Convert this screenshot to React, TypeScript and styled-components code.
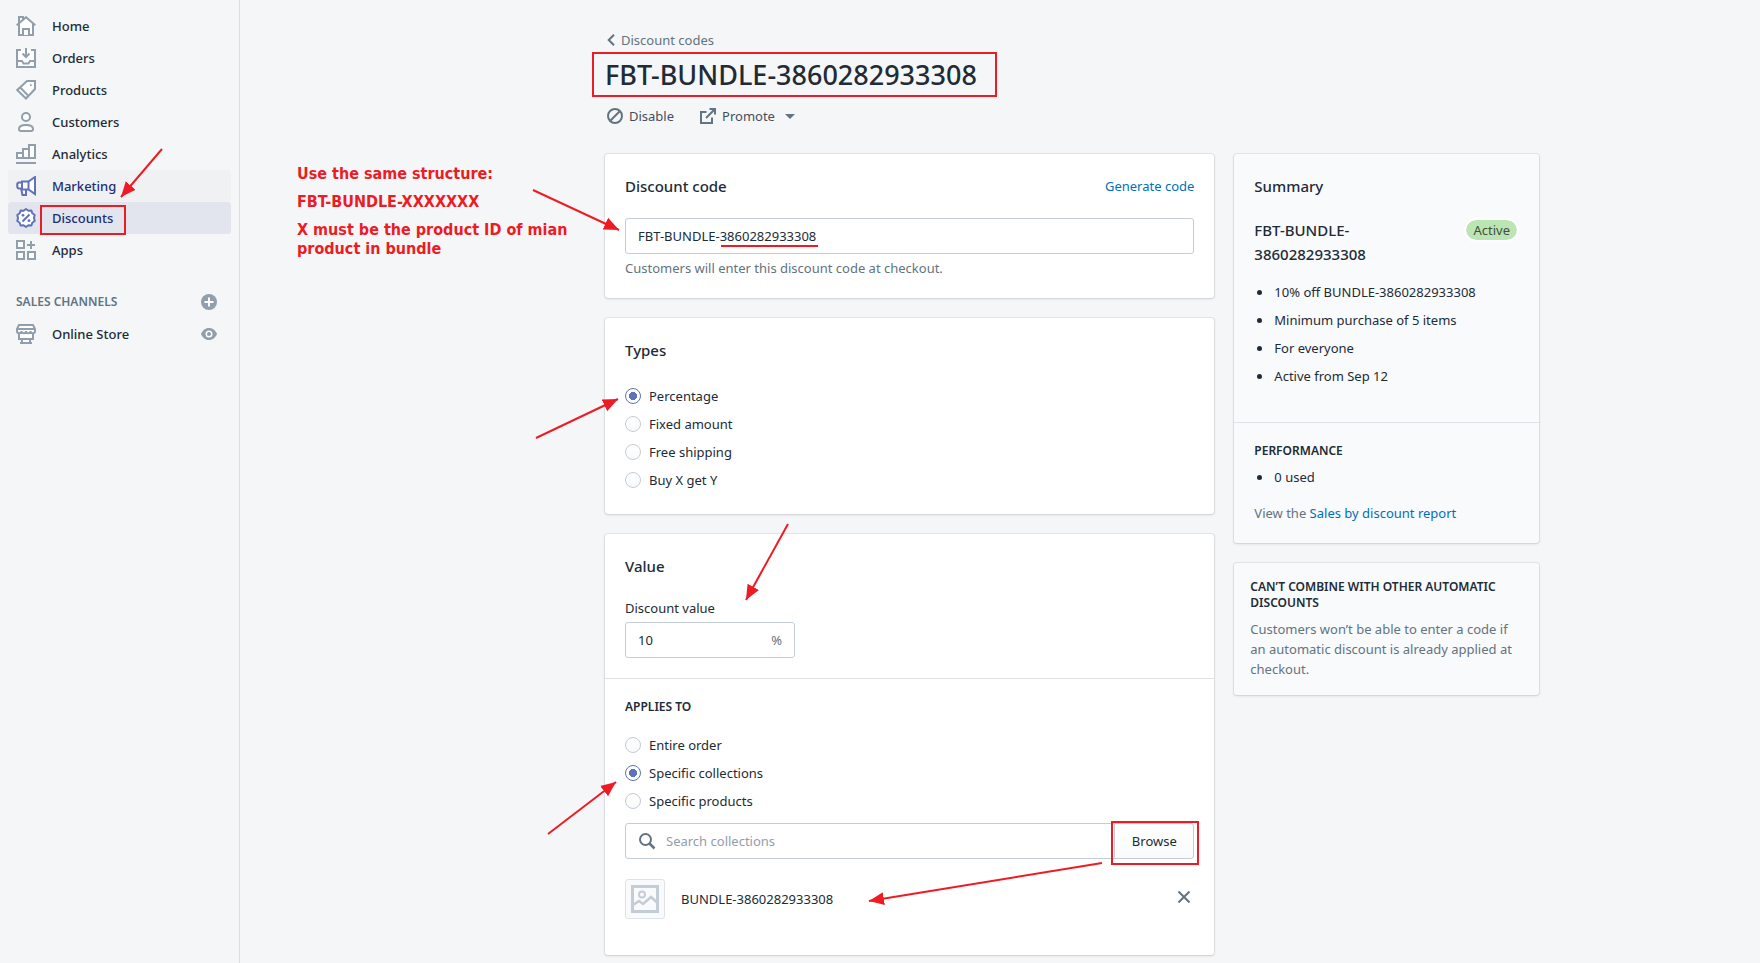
import React from "react";
import styled, { createGlobalStyle, css } from "styled-components";

const color = {
  page: "#f4f6f8",
  subdued: "#f9fafc",
  text: "#212b36",
  muted: "#637381",
  icon: "#919eab",
  iconDark: "#637381",
  border: "#c4cdd5",
  divider: "#dfe3e8",
  active: "#202e78",
  indigo: "#5f72bb",
  link: "#006fbb",
  note: "#ed1c24",
};

const GlobalStyle = createGlobalStyle`
  *, *::before, *::after { box-sizing: border-box; }
  body {
    margin: 0;
    background: ${color.page};
    color: ${color.text};
    font-family: "Noto Sans", "Open Sans", sans-serif;
    font-size: 13px;
    line-height: 20px;
  }
  button, input { font: inherit; color: inherit; }
  h1, h2, h3, p, ul { margin: 0; padding: 0; }
`;

/* ---------- Page frame ---------- */

const Page = styled.div`
  position: relative;
  display: flex;
  min-height: 100vh;
`;

const Sidebar = styled.nav`
  flex: 0 0 240px;
  padding: 10px 8px;
  border-right: 1px solid #d9dde4;
`;

const Main = styled.main`
  flex: 1;
  min-width: 0;
  padding: 30px 20px 8px 365px;
`;

const Content = styled.div`
  max-width: 934px;
`;

const Columns = styled.div`
  display: grid;
  grid-template-columns: 2fr 1fr;
  align-items: start;
  gap: 20px;
  margin-top: 28px;
`;

const Column = styled.div`
  display: flex;
  flex-direction: column;
  gap: 20px;
  min-width: 0;
`;

/* ---------- Navigation ---------- */

const NavList = styled.ul`
  list-style: none;
`;

const NavItem = styled.li`
  position: relative;
  display: flex;
  align-items: center;
`;

const NavLink = styled.a<{ $state?: "hover" | "selected" }>`
  flex: 1;
  display: flex;
  align-items: center;
  gap: 16px;
  height: 32px;
  padding: 0 8px;
  border-radius: 3px;
  color: ${color.text};
  font-weight: 500;
  text-decoration: none;
  --nav-icon: ${color.icon};
  ${({ $state }) =>
    $state &&
    css`
      color: ${color.active};
      background: ${$state === "selected" ? "#e2e5ed" : "#f0f1f3"};
      --nav-icon: ${color.indigo};
    `}
`;

const NavSection = styled.div`
  display: flex;
  align-items: center;
  justify-content: space-between;
  height: 32px;
  margin-top: 20px;
  padding: 0 8px;
`;

const NavHeading = styled.h2`
  color: ${color.muted};
  font-size: 12px;
  font-weight: 600;
`;

const IconButton = styled.button`
  display: flex;
  padding: 2px;
  border: 0;
  background: none;
`;

const SectionAction = styled(IconButton)`
  margin-right: 4px;
`;

const NavAction = styled(IconButton)`
  position: absolute;
  right: 12px;
`;

const RemoveButton = styled(IconButton)`
  margin-right: 2px;
  padding-bottom: 6px;
`;

const NavIcon = styled.svg`
  flex: none;
  width: 20px;
  height: 20px;
  fill: #fff;
  stroke: var(--nav-icon);
  stroke-width: 2;
`;

/* ---------- Page header ---------- */

const Breadcrumb = styled.a`
  display: inline-flex;
  align-items: center;
  gap: 6px;
  padding-left: 2px;
  color: ${color.muted};
  text-decoration: none;
  vertical-align: top;
`;

const TitleRow = styled.div`
  display: flex;
  margin-top: 5px;
`;

const Title = styled.h1`
  position: relative;
  font-size: 27px;
  font-weight: 500;
  line-height: 40px;
`;

const Actions = styled.div`
  display: flex;
  gap: 26px;
  margin-top: 11px;
  padding-left: 2px;
`;

const Action = styled.button`
  display: flex;
  align-items: center;
  gap: 6px;
  padding: 0;
  border: 0;
  background: none;
  color: #454f5b;
`;

const Caret = styled.span`
  margin-left: 4px;
  border: 5px solid transparent;
  border-top-color: ${color.iconDark};
  border-bottom: 0;
`;

/* ---------- Cards ---------- */

const Card = styled.section<{ $subdued?: boolean }>`
  border-radius: 3px;
  background: ${({ $subdued }) => ($subdued ? color.subdued : "#fff")};
  box-shadow: 0 0 0 1px rgba(63, 63, 68, 0.08), 0 1px 3px 0 rgba(63, 63, 68, 0.15);
`;

const Section = styled.div<{ $tight?: boolean }>`
  padding: ${({ $tight }) => ($tight ? "16px" : "20px")};
  & + & {
    border-top: 1px solid ${color.divider};
  }
`;

const CardHeader = styled.div`
  display: flex;
  align-items: center;
  justify-content: space-between;
  margin-bottom: 20px;
`;

const CardTitle = styled.h2`
  font-size: 15px;
  font-weight: 500;
  line-height: 24px;
`;

const Subheading = styled.h3<{ $gap: number }>`
  margin-bottom: ${({ $gap }) => $gap}px;
  font-size: 12px;
  font-weight: 600;
  line-height: 16px;
  text-transform: uppercase;
`;

const Link = styled.a`
  color: ${color.link};
  text-decoration: none;
`;

const LinkButton = styled.button`
  padding: 0;
  border: 0;
  background: none;
  color: ${color.link};
`;

const Muted = styled.p`
  color: ${color.muted};
`;

/* ---------- Form controls ---------- */

const Field = styled.div`
  display: flex;
  flex-direction: column;
  gap: 4px;
`;

const InputBox = styled.div<{ $width?: number; $joined?: boolean }>`
  position: relative;
  display: flex;
  align-items: center;
  gap: 10px;
  flex: 1;
  width: ${({ $width }) => ($width ? `${$width}px` : "auto")};
  min-height: 36px;
  padding: 0 12px;
  border: 1px solid ${color.border};
  border-radius: ${({ $joined }) => ($joined ? "3px 0 0 3px" : "3px")};
  background: #fff;
`;

const Input = styled.input`
  flex: 1;
  min-width: 0;
  padding: 0;
  border: 0;
  outline: 0;
  background: none;
  &::placeholder {
    color: ${color.icon};
    opacity: 1;
  }
`;

const Suffix = styled.span`
  color: ${color.muted};
`;

const Choices = styled.fieldset`
  display: flex;
  flex-direction: column;
  min-width: 0;
  margin: 0;
  padding: 0;
  border: 0;
`;

const Choice = styled.label`
  display: flex;
  align-items: center;
  gap: 8px;
  height: 28px;
`;

const Radio = styled.input`
  appearance: none;
  width: 16px;
  height: 16px;
  margin: 0;
  border: 1px solid ${color.border};
  border-radius: 50%;
  background: linear-gradient(#fff, #f9fafb);
  &:checked {
    border-color: ${color.indigo};
    background: radial-gradient(circle, ${color.indigo} 0 4px, #fff 4px);
  }
`;

const SearchRow = styled.div`
  display: flex;
  margin-top: 8px;
`;

const BrowseButton = styled.button`
  position: relative;
  width: 80px;
  height: 36px;
  margin-left: -1px;
  padding: 0;
  border: 1px solid ${color.border};
  border-radius: 0 3px 3px 0;
  background: linear-gradient(#fff, #f9fafb);
`;

const ResultRow = styled.div`
  display: flex;
  align-items: center;
  gap: 16px;
  padding: 20px 0 16px;
`;

const Thumbnail = styled.div`
  display: flex;
  align-items: center;
  justify-content: center;
  width: 40px;
  height: 40px;
  border: 1px solid ${color.divider};
  border-radius: 3px;
  background: ${color.subdued};
`;

const ResultName = styled.span`
  flex: 1;
`;

/* ---------- Summary ---------- */

const SummaryHead = styled.div`
  display: flex;
  align-items: flex-start;
  justify-content: space-between;
  gap: 20px;
  margin-bottom: 16px;
`;

const Badge = styled.span`
  padding: 0 7px;
  border: 2px solid #fff;
  border-radius: 12px;
  background: #bbe5b3;
  background-clip: padding-box;
  color: #414f3e;
`;

const Bullets = styled.ul<{ $end: number }>`
  display: flex;
  flex-direction: column;
  gap: 8px;
  margin-bottom: ${({ $end }) => $end}px;
  list-style: none;
`;

const Bullet = styled.li`
  display: flex;
  align-items: center;
  gap: 12px;
  padding-left: 3px;
  &::before {
    content: "";
    width: 5px;
    height: 5px;
    border-radius: 50%;
    background: ${color.text};
  }
`;

/* ---------- Annotations ---------- */

const Outline = styled.span<{ $inset: string }>`
  position: absolute;
  inset: ${({ $inset }) => $inset};
  border: 2px solid ${color.note};
  pointer-events: none;
`;

const Underline = styled.span`
  position: absolute;
  left: 95px;
  bottom: 6px;
  width: 97px;
  height: 2px;
  background: ${color.note};
`;

const Notes = styled.aside`
  position: absolute;
  top: 164px;
  left: 297px;
  width: 290px;
  color: ${color.note};
  font-family: "DejaVu Sans Condensed", "DejaVu Sans", sans-serif;
  font-size: 16px;
  font-weight: 700;
  line-height: 19px;
  p + p {
    margin-top: 9px;
  }
`;

const ArrowLayer = styled.svg`
  position: absolute;
  inset: 0;
  width: 100%;
  height: 100%;
  pointer-events: none;
`;

const arrows = [
  [162, 149, 121, 197],
  [533, 190, 619, 230],
  [536, 438, 618, 399],
  [788, 524, 746, 600],
  [548, 834, 616, 782],
  [1102, 863, 869, 901],
];

const Arrows = () => (
  <ArrowLayer aria-hidden="true">
    <defs>
      <marker id="head" markerUnits="userSpaceOnUse" markerWidth="16" markerHeight="14" refX="15" refY="7" orient="auto">
        <path d="M0 0.5 15 7 0 13.5z" fill={color.note} />
      </marker>
    </defs>
    {arrows.map(([x1, y1, x2, y2]) => (
      <line key={`${x1}-${y1}`} x1={x1} y1={y1} x2={x2} y2={y2} stroke={color.note} strokeWidth="2" markerEnd="url(#head)" />
    ))}
  </ArrowLayer>
);

/* ---------- Icons ---------- */

const navIcons: Record<string, React.ReactNode> = {
  Home: (
    <>
      <path d="M3 9V1h4v3M3 8v11h14V8" />
      <path d="M3 9 10 2l7 7v10H3z" stroke="none" />
      <path d="M0.7 9.3 10 1.2l9.3 8.1" fill="none" />
      <path d="M3 8v11h14V8" fill="none" />
      <path d="M7 19v-6h6v6" />
    </>
  ),
  Orders: (
    <>
      <path d="M5 2H1v17h18V2h-4" />
      <path d="M1 13h5l1.5 2.500h5L14 13h5v6H1z" />
      <path d="M10 0v9M6.500 5.500 10 9l3.500-3.500" fill="none" />
    </>
  ),
  Products: (
    <>
      <path d="M11 1h8v8l-9 9.500L1.300 10z" />
      <path d="M4 7.300 12.500 16" fill="none" />
      <circle cx="14.800" cy="5.200" r="1" fill="var(--nav-icon)" stroke="none" />
    </>
  ),
  Customers: (
    <>
      <circle cx="10" cy="5" r="4" />
      <path d="M3 17c0-3 3-4 7-4s7 1 7 4c0 1.500-1 2-2 2H5c-1 0-2-.5-2-2z" />
    </>
  ),
  Analytics: (
    <>
      <path d="M1 9h6v5H1zM7 5h6v9H7zM13 1h6v13h-6z" />
      <path d="M0 19h20" />
    </>
  ),
  Marketing: (
    <>
      <path d="M5 12l1.500 7H10v-6" />
      <path d="M19 1v17l-6.500-4.500H6V5.500h6.500z" />
      <path d="M6 6.500H3.500a2 2 0 0 0-2 3 2 2 0 0 0 2 3H6z" />
      <path d="M12.500 5.500v8" fill="none" />
    </>
  ),
  Discounts: (
    <>
      <path d="M10 1l2.400 1.700 3-.2.9 2.800 2.400 1.700L18 10l.7 3-2.400 1.700-.9 2.800-3-.2L10 19l-2.400-1.700-3 .2-.9-2.800L1.300 13 2 10l-.7-3 2.400-1.700.9-2.800 3 .2z" strokeLinejoin="round" />
      <path d="M6.500 13.500l7-7" />
      <circle cx="7" cy="7.300" r="1.400" fill="var(--nav-icon)" stroke="none" />
      <circle cx="13" cy="12.700" r="1.400" fill="var(--nav-icon)" stroke="none" />
    </>
  ),
  Apps: (
    <>
      <path d="M1 1h7v7H1zM1 12h7v7H1zM12 12h7v7h-7z" />
      <path d="M15 1v8M11 5h8" />
    </>
  ),
  "Online Store": (
    <>
      <path d="M6 15h8v4H6z" />
      <path d="M3 8v7h14V8z" />
      <path d="M3 1h14l2 4v2c0 3-4.500 3-4.500 0 0 3-4.500 3-4.500 0 0 3-4.500 3-4.500 0C5.500 10 1 10 1 7V5z" />
      <path d="M1.500 5h17M4 19h12" fill="none" />
    </>
  ),
};

const PlusCircle = () => (
  <svg width="16" height="16" viewBox="0 0 16 16">
    <circle cx="8" cy="8" r="8" fill={color.icon} />
    <path d="M8 3.500v9M3.500 8h9" stroke="#fff" strokeWidth="2" />
  </svg>
);

const Eye = () => (
  <svg width="16" height="16" viewBox="0 0 16 16">
    <path d="M0 8c1.300-3.300 4-6 8-6s6.700 2.700 8 6c-1.300 3.300-4 6-8 6S1.300 11.300 0 8z" fill={color.icon} />
    <circle cx="8" cy="8" r="3.500" fill="#fff" />
    <circle cx="8" cy="8" r="2" fill={color.icon} />
  </svg>
);

const ChevronLeft = () => (
  <svg width="8" height="12" viewBox="0 0 8 12" fill="none" stroke={color.iconDark} strokeWidth="2">
    <path d="M7 0.700 1.700 6 7 11.300" />
  </svg>
);

const Prohibited = () => (
  <svg width="16" height="16" viewBox="0 0 16 16" fill="none" stroke={color.iconDark} strokeWidth="2">
    <circle cx="8" cy="8" r="7" />
    <path d="M3.500 12.500l9-9" />
  </svg>
);

const External = () => (
  <svg width="16" height="16" viewBox="0 0 16 16" fill="none" stroke={color.iconDark} strokeWidth="2">
    <path d="M6.500 4H1v11h11V9.500M9.500 1H15v5.500M15 1 6 10" />
  </svg>
);

const Magnifier = () => (
  <svg width="18" height="18" viewBox="0 0 18 18" fill="none" stroke={color.iconDark} strokeWidth="2">
    <circle cx="7.500" cy="7.500" r="5.500" />
    <path d="M11.500 11.500l5 5" strokeWidth="2.500" />
  </svg>
);

const Picture = () => (
  <svg width="28" height="28" viewBox="0 0 28 28" fill="none" stroke={color.border}>
    <rect x="1.500" y="1.500" width="25" height="25" strokeWidth="3" />
    <circle cx="11" cy="9.500" r="3" strokeWidth="2" />
    <path d="M2 20l6-4 4 3 8-7 6 5.500" strokeWidth="2.500" />
  </svg>
);

const Cross = () => (
  <svg width="12" height="12" viewBox="0 0 12 12" stroke={color.iconDark} strokeWidth="2">
    <path d="M0.500 0.500l11 11M11.500 0.500l-11 11" />
  </svg>
);

/* ---------- App ---------- */

const mainNav = ["Home", "Orders", "Products", "Customers", "Analytics", "Marketing", "Discounts", "Apps"];
const navState: Record<string, "hover" | "selected"> = { Marketing: "hover", Discounts: "selected" };
const types = ["Percentage", "Fixed amount", "Free shipping", "Buy X get Y"];
const targets = ["Entire order", "Specific collections", "Specific products"];
const summary = ["10% off BUNDLE-3860282933308", "Minimum purchase of 5 items", "For everyone", "Active from Sep 12"];

const NavEntry = ({ name, children }: { name: string; children?: React.ReactNode }) => (
  <NavItem>
    <NavLink href="#" $state={navState[name]}>
      <NavIcon viewBox="0 0 20 20">{navIcons[name]}</NavIcon>
      {name}
    </NavLink>
    {children}
  </NavItem>
);

const RadioGroup = ({ name, options, selected }: { name: string; options: string[]; selected: string }) => (
  <Choices aria-label={name}>
    {options.map((option) => (
      <Choice key={option}>
        <Radio type="radio" name={name} defaultChecked={option === selected} />
        {option}
      </Choice>
    ))}
  </Choices>
);

export default function App() {
  return (
    <Page>
      <GlobalStyle />
      <Sidebar>
        <NavList>
          {mainNav.map((name) => (
            <NavEntry key={name} name={name}>
              {name === "Discounts" && <Outline $inset="3px 105px -1px 32px" />}
            </NavEntry>
          ))}
        </NavList>
        <NavSection>
          <NavHeading>SALES CHANNELS</NavHeading>
          <SectionAction aria-label="Add sales channel">
            <PlusCircle />
          </SectionAction>
        </NavSection>
        <NavList>
          <NavEntry name="Online Store">
            <NavAction aria-label="View online store">
              <Eye />
            </NavAction>
          </NavEntry>
        </NavList>
      </Sidebar>

      <Main>
        <Content>
          <Breadcrumb href="#">
            <ChevronLeft />
            Discount codes
          </Breadcrumb>
          <TitleRow>
            <Title>
              FBT-BUNDLE-3860282933308
              <Outline $inset="-3px -20px -2px -13px" />
            </Title>
          </TitleRow>
          <Actions>
            <Action>
              <Prohibited />
              Disable
            </Action>
            <Action>
              <External />
              Promote
              <Caret />
            </Action>
          </Actions>

          <Columns>
            <Column>
              <Card>
                <Section>
                  <CardHeader>
                    <CardTitle>Discount code</CardTitle>
                    <LinkButton>Generate code</LinkButton>
                  </CardHeader>
                  <Field>
                    <InputBox>
                      <Input aria-label="Discount code" defaultValue="FBT-BUNDLE-3860282933308" />
                      <Underline />
                    </InputBox>
                    <Muted>Customers will enter this discount code at checkout.</Muted>
                  </Field>
                </Section>
              </Card>

              <Card>
                <Section>
                  <CardHeader>
                    <CardTitle>Types</CardTitle>
                  </CardHeader>
                  <RadioGroup name="Types" options={types} selected="Percentage" />
                </Section>
              </Card>

              <Card>
                <Section>
                  <CardHeader>
                    <CardTitle>Value</CardTitle>
                  </CardHeader>
                  <Field>
                    <label htmlFor="discount-value">Discount value</label>
                    <InputBox $width={170}>
                      <Input id="discount-value" defaultValue="10" />
                      <Suffix>%</Suffix>
                    </InputBox>
                  </Field>
                </Section>
                <Section>
                  <Subheading $gap={16}>Applies to</Subheading>
                  <RadioGroup name="Applies to" options={targets} selected="Specific collections" />
                  <SearchRow>
                    <InputBox $joined>
                      <Magnifier />
                      <Input aria-label="Search collections" placeholder="Search collections" />
                    </InputBox>
                    <BrowseButton>
                      Browse
                      <Outline $inset="-3px -6px -7px -4px" />
                    </BrowseButton>
                  </SearchRow>
                  <ResultRow>
                    <Thumbnail>
                      <Picture />
                    </Thumbnail>
                    <ResultName>BUNDLE-3860282933308</ResultName>
                    <RemoveButton aria-label="Remove collection">
                      <Cross />
                    </RemoveButton>
                  </ResultRow>
                </Section>
              </Card>
            </Column>

            <Column>
              <Card $subdued>
                <Section>
                  <CardHeader>
                    <CardTitle>Summary</CardTitle>
                  </CardHeader>
                  <SummaryHead>
                    <CardTitle as="p">
                      FBT-BUNDLE-
                      <br />
                      3860282933308
                    </CardTitle>
                    <Badge>Active</Badge>
                  </SummaryHead>
                  <Bullets $end={16}>
                    {summary.map((line) => (
                      <Bullet key={line}>{line}</Bullet>
                    ))}
                  </Bullets>
                </Section>
                <Section>
                  <Subheading $gap={8}>Performance</Subheading>
                  <Bullets $end={16}>
                    <Bullet>0 used</Bullet>
                  </Bullets>
                  <Muted>
                    View the <Link href="#">Sales by discount report</Link>
                  </Muted>
                </Section>
              </Card>

              <Card $subdued>
                <Section $tight>
                  <Subheading $gap={8}>Can’t combine with other automatic discounts</Subheading>
                  <Muted>Customers won’t be able to enter a code if an automatic discount is already applied at checkout.</Muted>
                </Section>
              </Card>
            </Column>
          </Columns>
        </Content>
      </Main>

      <Notes>
        <p>Use the same structure:</p>
        <p>FBT-BUNDLE-XXXXXXX</p>
        <p>X must be the product ID of mian product in bundle</p>
      </Notes>
      <Arrows />
    </Page>
  );
}
